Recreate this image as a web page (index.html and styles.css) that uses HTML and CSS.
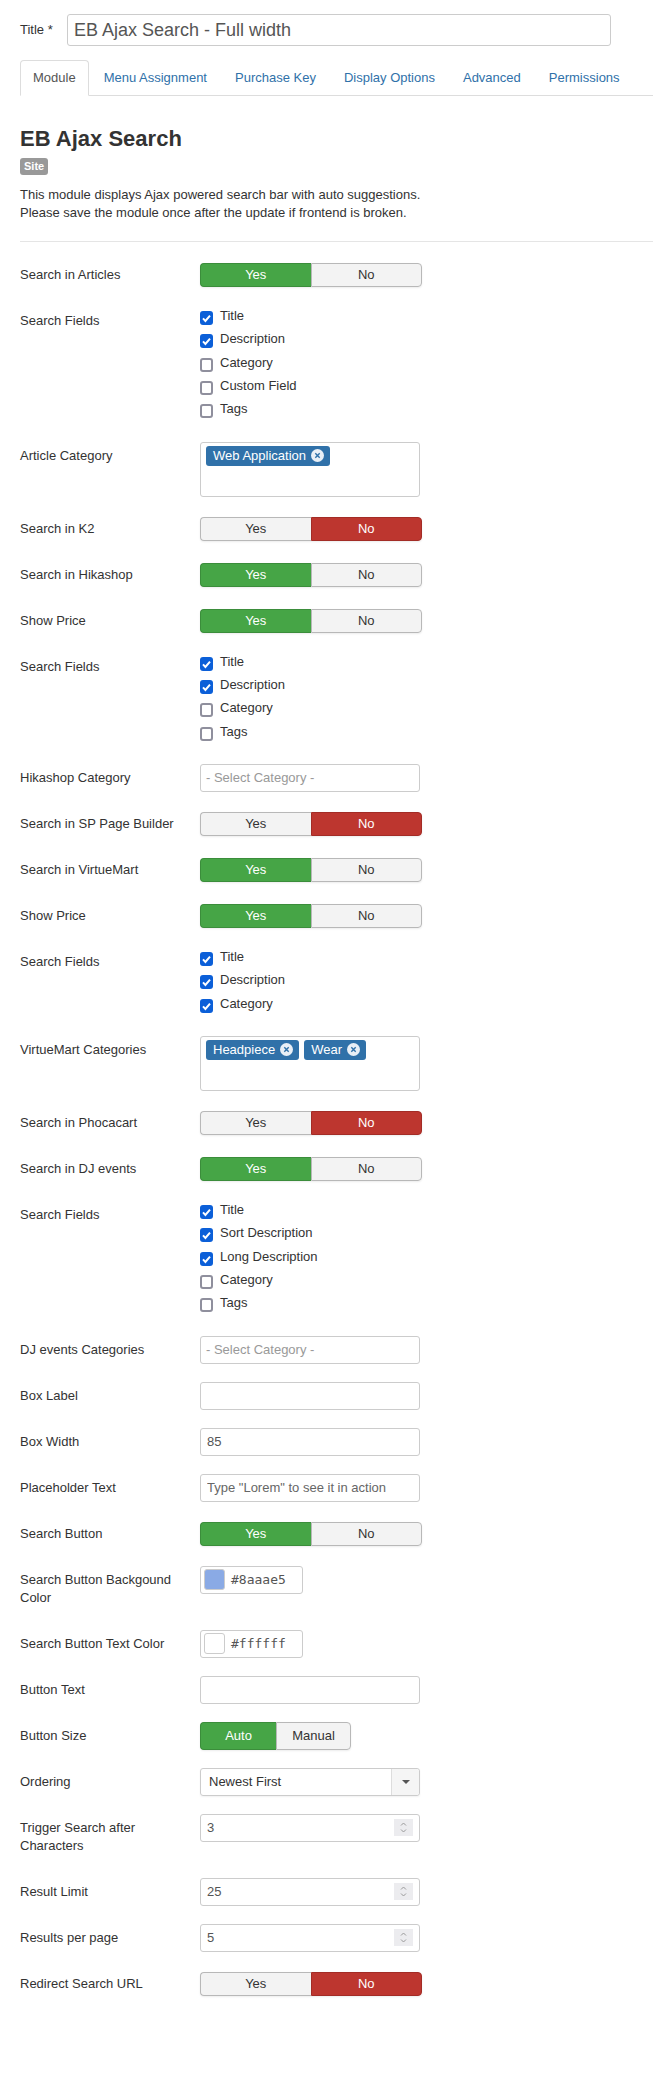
FILE: index.html
```html
<!DOCTYPE html><html><head><meta charset="utf-8"/>
<meta name="viewport" content="width=device-width, initial-scale=1.0"/>
<title>Module: EB Ajax Search</title>
<link rel="stylesheet" href="styles.css">
</head>
<body>

<div class="title-row">
	<label for="jform_title">Title *</label>
	<input id="jform_title" class="title-input" type="text" value="EB Ajax Search - Full width">
</div>

<ul class="nav-tabs">
	<li class="active"><a href="#general">Module</a></li>
	<li><a href="#assignment">Menu Assignment</a></li>
	<li><a href="#purchase">Purchase Key</a></li>
	<li><a href="#display">Display Options</a></li>
	<li><a href="#advanced">Advanced</a></li>
	<li><a href="#permissions">Permissions</a></li>
</ul>

<div class="tab-content">
	<h2>EB Ajax Search</h2>
	<span class="badge">Site</span>
	<p class="info">This module displays Ajax powered search bar with auto suggestions.<br>
	Please save the module once after the update if frontend is broken.</p>
	<hr>

	<div class="form-horizontal">

		<div class="control-group">
			<label class="control-label">Search in Articles</label>
			<div class="controls"><div class="switch"><span class="yes on">Yes</span><span class="no">No</span></div></div>
		</div>

		<div class="control-group">
			<label class="control-label">Search Fields</label>
			<div class="controls checks">
				<label><span class="cb on"><svg viewBox="0 0 13 14"><path d="M3 7.4l2.4 2.5L10 4.6"/></svg></span>Title</label>
				<label><span class="cb on"><svg viewBox="0 0 13 14"><path d="M3 7.4l2.4 2.5L10 4.6"/></svg></span>Description</label>
				<label><span class="cb"></span>Category</label>
				<label><span class="cb"></span>Custom Field</label>
				<label><span class="cb"></span>Tags</label>
			</div>
		</div>

		<div class="control-group">
			<label class="control-label">Article Category</label>
			<div class="controls">
				<div class="chzn-box">
					<span class="tag">Web Application<svg viewBox="0 0 13 13"><circle cx="6.5" cy="6.5" r="6.5"/><path d="M4.3 4.3l4.4 4.4M8.7 4.3l-4.4 4.4"/></svg></span>
				</div>
			</div>
		</div>

		<div class="control-group">
			<label class="control-label">Search in K2</label>
			<div class="controls"><div class="switch"><span class="yes">Yes</span><span class="no on">No</span></div></div>
		</div>

		<div class="control-group">
			<label class="control-label">Search in Hikashop</label>
			<div class="controls"><div class="switch"><span class="yes on">Yes</span><span class="no">No</span></div></div>
		</div>

		<div class="control-group">
			<label class="control-label">Show Price</label>
			<div class="controls"><div class="switch"><span class="yes on">Yes</span><span class="no">No</span></div></div>
		</div>

		<div class="control-group">
			<label class="control-label">Search Fields</label>
			<div class="controls checks">
				<label><span class="cb on"><svg viewBox="0 0 13 14"><path d="M3 7.4l2.4 2.5L10 4.6"/></svg></span>Title</label>
				<label><span class="cb on"><svg viewBox="0 0 13 14"><path d="M3 7.4l2.4 2.5L10 4.6"/></svg></span>Description</label>
				<label><span class="cb"></span>Category</label>
				<label><span class="cb"></span>Tags</label>
			</div>
		</div>

		<div class="control-group">
			<label class="control-label">Hikashop Category</label>
			<div class="controls"><div class="select placeholder">- Select Category -</div></div>
		</div>

		<div class="control-group">
			<label class="control-label">Search in SP Page Builder</label>
			<div class="controls"><div class="switch"><span class="yes">Yes</span><span class="no on">No</span></div></div>
		</div>

		<div class="control-group">
			<label class="control-label">Search in VirtueMart</label>
			<div class="controls"><div class="switch"><span class="yes on">Yes</span><span class="no">No</span></div></div>
		</div>

		<div class="control-group">
			<label class="control-label">Show Price</label>
			<div class="controls"><div class="switch"><span class="yes on">Yes</span><span class="no">No</span></div></div>
		</div>

		<div class="control-group">
			<label class="control-label">Search Fields</label>
			<div class="controls checks">
				<label><span class="cb on"><svg viewBox="0 0 13 14"><path d="M3 7.4l2.4 2.5L10 4.6"/></svg></span>Title</label>
				<label><span class="cb on"><svg viewBox="0 0 13 14"><path d="M3 7.4l2.4 2.5L10 4.6"/></svg></span>Description</label>
				<label><span class="cb on"><svg viewBox="0 0 13 14"><path d="M3 7.4l2.4 2.5L10 4.6"/></svg></span>Category</label>
			</div>
		</div>

		<div class="control-group">
			<label class="control-label">VirtueMart Categories</label>
			<div class="controls">
				<div class="chzn-box">
					<span class="tag">Headpiece<svg viewBox="0 0 13 13"><circle cx="6.5" cy="6.5" r="6.5"/><path d="M4.3 4.3l4.4 4.4M8.7 4.3l-4.4 4.4"/></svg></span>
					<span class="tag">Wear<svg viewBox="0 0 13 13"><circle cx="6.5" cy="6.5" r="6.5"/><path d="M4.3 4.3l4.4 4.4M8.7 4.3l-4.4 4.4"/></svg></span>
				</div>
			</div>
		</div>

		<div class="control-group">
			<label class="control-label">Search in Phocacart</label>
			<div class="controls"><div class="switch"><span class="yes">Yes</span><span class="no on">No</span></div></div>
		</div>

		<div class="control-group">
			<label class="control-label">Search in DJ events</label>
			<div class="controls"><div class="switch"><span class="yes on">Yes</span><span class="no">No</span></div></div>
		</div>

		<div class="control-group">
			<label class="control-label">Search Fields</label>
			<div class="controls checks">
				<label><span class="cb on"><svg viewBox="0 0 13 14"><path d="M3 7.4l2.4 2.5L10 4.6"/></svg></span>Title</label>
				<label><span class="cb on"><svg viewBox="0 0 13 14"><path d="M3 7.4l2.4 2.5L10 4.6"/></svg></span>Sort Description</label>
				<label><span class="cb on"><svg viewBox="0 0 13 14"><path d="M3 7.4l2.4 2.5L10 4.6"/></svg></span>Long Description</label>
				<label><span class="cb"></span>Category</label>
				<label><span class="cb"></span>Tags</label>
			</div>
		</div>

		<div class="control-group">
			<label class="control-label">DJ events Categories</label>
			<div class="controls"><div class="select placeholder">- Select Category -</div></div>
		</div>

		<div class="control-group">
			<label class="control-label">Box Label</label>
			<div class="controls"><input class="text" type="text" value=""></div>
		</div>

		<div class="control-group">
			<label class="control-label">Box Width</label>
			<div class="controls"><input class="text" type="text" value="85"></div>
		</div>

		<div class="control-group">
			<label class="control-label">Placeholder Text</label>
			<div class="controls"><input class="text" type="text" placeholder='Type "Lorem" to see it in action'></div>
		</div>

		<div class="control-group">
			<label class="control-label">Search Button</label>
			<div class="controls"><div class="switch"><span class="yes on">Yes</span><span class="no">No</span></div></div>
		</div>

		<div class="control-group">
			<label class="control-label">Search Button Backgound Color</label>
			<div class="controls"><div class="color"><span class="swatch" style="background:#8aaae5"></span>#8aaae5</div></div>
		</div>

		<div class="control-group">
			<label class="control-label">Search Button Text Color</label>
			<div class="controls"><div class="color"><span class="swatch" style="background:#ffffff"></span>#ffffff</div></div>
		</div>

		<div class="control-group">
			<label class="control-label">Button Text</label>
			<div class="controls"><input class="text" type="text" value=""></div>
		</div>

		<div class="control-group">
			<label class="control-label">Button Size</label>
			<div class="controls"><div class="switch size"><span class="yes on">Auto</span><span class="no">Manual</span></div></div>
		</div>

		<div class="control-group">
			<label class="control-label">Ordering</label>
			<div class="controls"><div class="select ordering">Newest First<span class="caret-box"><span class="caret"></span></span></div></div>
		</div>

		<div class="control-group">
			<label class="control-label">Trigger Search after Characters</label>
			<div class="controls"><div class="number">3<svg class="spin" viewBox="0 0 19 17"><path d="M7 6.5l2.5-2.5 2.5 2.5M7 10.5l2.5 2.5 2.5-2.5"/></svg></div></div>
		</div>

		<div class="control-group">
			<label class="control-label">Result Limit</label>
			<div class="controls"><div class="number">25<svg class="spin" viewBox="0 0 19 17"><path d="M7 6.5l2.5-2.5 2.5 2.5M7 10.5l2.5 2.5 2.5-2.5"/></svg></div></div>
		</div>

		<div class="control-group">
			<label class="control-label">Results per page</label>
			<div class="controls"><div class="number">5<svg class="spin" viewBox="0 0 19 17"><path d="M7 6.5l2.5-2.5 2.5 2.5M7 10.5l2.5 2.5 2.5-2.5"/></svg></div></div>
		</div>

		<div class="control-group">
			<label class="control-label">Redirect Search URL</label>
			<div class="controls"><div class="switch"><span class="yes">Yes</span><span class="no on">No</span></div></div>
		</div>

	</div>
</div>

</body>
</html>
```

FILE: styles.css
```css
body {
	margin: 0;
	padding: 14px 0 0 20px;
	font-family: "Liberation Sans", Arial, sans-serif;
	font-size: 13px;
	line-height: 18px;
	color: #333;
	background: #fff;
}
* {
	box-sizing: border-box;
}
/* title */
.title-row {
	display: flex;
	align-items: center;
}
.title-row label {
	width: 47px;
}
.title-input {
	width: 544px;
	height: 32px;
	padding: 4px 6px;
	font-family: inherit;
	font-size: 18px;
	line-height: 22px;
	color: #555;
	border: 1px solid #ccc;
	border-radius: 3px;
}
/* tabs */
.nav-tabs {
	display: flex;
	list-style: none;
	margin: 14px 0 0;
	padding: 0;
	border-bottom: 1px solid #ddd;
}
.nav-tabs li {
	margin: 0 2px -1px 0;
}
.nav-tabs a {
	display: block;
	padding: 8px 12px;
	line-height: 18px;
	color: #3071a9;
	text-decoration: none;
	border: 1px solid transparent;
	border-radius: 4px 4px 0 0;
}
.nav-tabs .active a {
	color: #555;
	background: #fff;
	border-color: #ddd #ddd transparent;
}
/* header */
h2 {
	margin: 30px 0 6px;
	font-size: 22px;
	line-height: 26px;
	color: #333;
}
.badge {
	display: inline-block;
	padding: 2px 4px;
	font-size: 11px;
	font-weight: bold;
	line-height: 13px;
	color: #fff;
	background: #999;
	border-radius: 3px;
	vertical-align: top;
}
.info {
	margin: 10px 0 0;
}
hr {
	margin: 19px 0;
	border: 0;
	border-top: 1px solid #e5e5e5;
}
/* form rows */
.control-group {
	display: flex;
	align-items: flex-start;
	margin-bottom: 18px;
}
.control-label {
	flex: none;
	width: 160px;
	margin-right: 20px;
	padding: 5px 0;
}
.controls {
	min-height: 28px;
}
/* yes / no switch */
.switch {
	display: flex;
	width: 222px;
	margin-top: 2px;
	border-radius: 4px;
	box-shadow: 0 1px 2px rgba(0, 0, 0, .08);
}
.switch span {
	flex: 1;
	height: 24px;
	line-height: 22px;
	text-align: center;
	color: #333;
	background: #f3f3f3;
	border: 1px solid #b8b8b8;
}
.switch span:first-child {
	border-right: 0;
	border-radius: 4px 0 0 4px;
}
.switch span:last-child {
	border-radius: 0 4px 4px 0;
}
.switch .yes.on {
	color: #fff;
	background: #46a546;
	border-color: #3b8d3b;
}
.switch .no.on {
	color: #fff;
	background: #bd362f;
	border-color: #a32c26;
}
.switch.size {
	width: auto;
	margin-top: 0;
}
.switch.size span {
	flex: none;
	height: 28px;
	line-height: 26px;
}
.switch.size .yes {
	width: 76px;
}
.switch.size .no {
	width: 75px;
}
/* checkboxes */
.checks label {
	display: flex;
	align-items: flex-start;
	height: 18px;
	margin-bottom: 5.33px;
}
.cb {
	flex: none;
	width: 13px;
	height: 14px;
	margin: 4px 7px 0 0;
	border: 2px solid #8f8f9d;
	border-radius: 3px;
	background: #fff;
}
.cb.on {
	border: 0;
	background: #0b5fd8;
}
.cb svg {
	display: block;
	width: 13px;
	height: 14px;
	fill: none;
	stroke: #fff;
	stroke-width: 2;
}
/* chosen multi select */
.chzn-box {
	display: flex;
	align-items: flex-start;
	gap: 5px;
	width: 220px;
	height: 55px;
	padding: 3px 5px;
	border: 1px solid #ccc;
	border-radius: 3px;
}
.tag {
	display: flex;
	align-items: center;
	gap: 5px;
	height: 20px;
	padding: 0 6px 0 7px;
	color: #fff;
	background: #3071a9;
	border-radius: 3px;
}
.tag svg {
	width: 13px;
	height: 13px;
}
.tag svg circle {
	fill: #e9eff6;
}
.tag svg path {
	fill: none;
	stroke: #3071a9;
	stroke-width: 1.4;
}
/* inputs */
.text,
.select,
.number {
	width: 220px;
	height: 28px;
	padding: 4px 6px;
	font-family: inherit;
	font-size: 13px;
	line-height: 18px;
	color: #555;
	border: 1px solid #ccc;
	border-radius: 3px;
}
.text::placeholder {
	color: #666;
	opacity: 1;
}
.select.placeholder {
	padding-left: 5px;
	color: #999;
}
.select.ordering {
	display: flex;
	padding: 0 0 0 8px;
	line-height: 26px;
	color: #333;
	box-shadow: 0 1px 2px rgba(0, 0, 0, .06);
}
.caret-box {
	display: flex;
	align-items: center;
	justify-content: center;
	width: 28px;
	margin-left: auto;
	background: #f5f5f5;
	border-left: 1px solid #ddd;
	border-radius: 0 3px 3px 0;
}
.caret {
	width: 0;
	height: 0;
	border-top: 4px solid #555;
	border-left: 4px solid transparent;
	border-right: 4px solid transparent;
}
.number {
	display: flex;
	align-items: center;
	justify-content: space-between;
	padding: 0 6px;
}
.spin {
	width: 19px;
	height: 17px;
	background: #ececef;
	fill: none;
	stroke: #9a9a9a;
	stroke-width: 1;
}
/* colour picker */
.color {
	display: flex;
	align-items: center;
	gap: 6px;
	width: 103px;
	height: 28px;
	padding: 0 3px;
	font-family: "DejaVu Sans Mono", "Liberation Mono", monospace;
	font-size: 13px;
	color: #555;
	border: 1px solid #ccc;
	border-radius: 3px;
}
.swatch {
	width: 21px;
	height: 21px;
	border: 1px solid #ccc;
	border-radius: 3px;
}
```
